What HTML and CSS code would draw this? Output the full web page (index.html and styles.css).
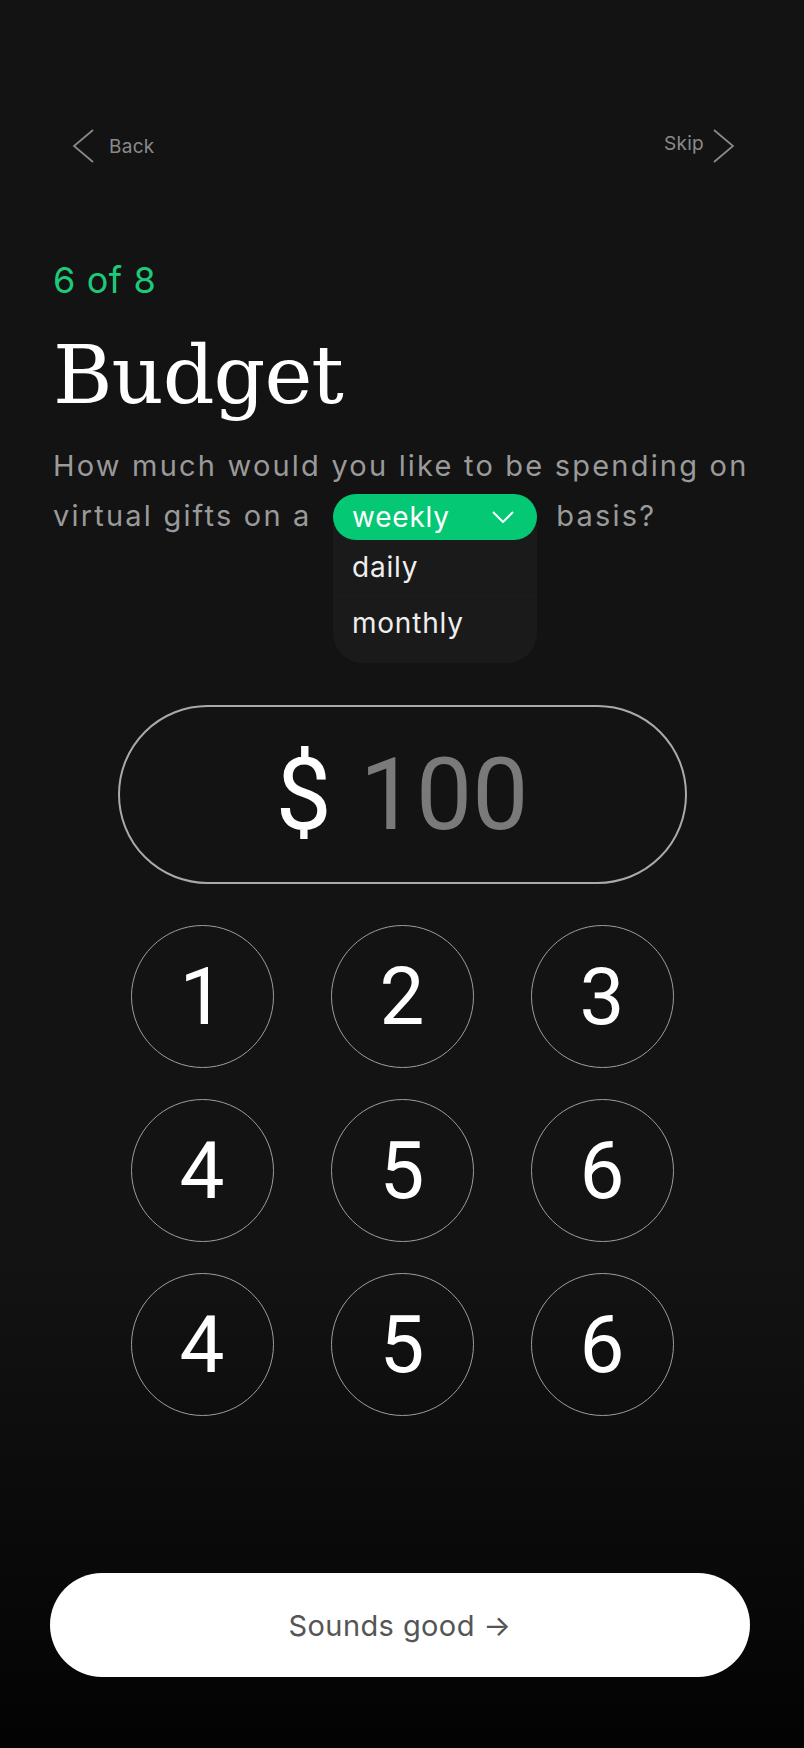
FILE: index.html
```html
<!DOCTYPE html>
<html lang="en">
<head>
    <meta charset="UTF-8">
    <meta name="viewport" content="width=device-width, initial-scale=1.0">
    <title>Budget</title>
    <link rel="stylesheet" href="styles.css">
</head>
<body>
    <div class="screen">
        <nav class="nav">
            <a class="nav-link back" href="#">
                <svg width="22" height="34" viewBox="0 0 22 34"><polyline points="21,1 2,17 21,33" /></svg>
                <span>Back</span>
            </a>
            <a class="nav-link skip" href="#">
                <span>Skip</span>
                <svg width="22" height="34" viewBox="0 0 22 34"><polyline points="1,1 20,17 1,33" /></svg>
            </a>
        </nav>

        <section class="intro">
            <p class="step">6 of 8</p>
            <h1>Budget</h1>
            <p class="question">
                How much would you like to be spending on virtual gifts on a
                <span class="select">
                    <span class="select-value">
                        weekly
                        <svg width="22" height="12" viewBox="0 0 22 12"><polyline points="1,1 11,11 21,1" /></svg>
                    </span>
                    <span class="select-menu">
                        <span class="option">daily</span>
                        <span class="option">monthly</span>
                    </span>
                </span>
                basis?
            </p>
        </section>

        <div class="amount">
            <span class="currency">$</span>
            <span class="value">100</span>
        </div>

        <div class="keypad">
            <button class="key">1</button>
            <button class="key">2</button>
            <button class="key">3</button>
            <button class="key">4</button>
            <button class="key">5</button>
            <button class="key">6</button>
            <button class="key">4</button>
            <button class="key">5</button>
            <button class="key">6</button>
        </div>

        <div class="footer">
            <button class="confirm">Sounds good →</button>
        </div>
    </div>
</body>
</html>
```

FILE: styles.css
```css
body {
    margin: 0;
    padding: 0;
    background: linear-gradient(#131313 0%, #131313 72%, #030303 100%);
    color: #fff;
    font-family: Inter, "Noto Sans", sans-serif;
    min-height: 1748px;
}
.screen {
    width: 804px;
    height: 1748px;
}
.nav {
    display: flex;
    justify-content: space-between;
    align-items: center;
    padding: 129px 69px 0 72px;
    height: 34px;
}
.nav-link {
    display: flex;
    align-items: center;
    gap: 15px;
    color: #8a8a8a;
    text-decoration: none;
    font-size: 19px;
    letter-spacing: 0.3px;
}
.nav-link svg polyline {
    fill: none;
    stroke: #8a8a8a;
    stroke-width: 1.7;
}
.skip {
    gap: 9px;
}
.skip span {
    margin-bottom: 6px;
}
.intro {
    padding: 0 48px 0 53px;
}
.step {
    margin: 99px 0 0;
    font-size: 36px;
    line-height: 36px;
    letter-spacing: 0.6px;
    color: #1ec97a;
}
h1 {
    margin: 37px 0 0;
    font-family: "DejaVu Serif", serif;
    font-weight: normal;
    font-size: 81px;
    line-height: 81px;
    letter-spacing: -1px;
}
.question {
    margin: 25px 0 0;
    font-size: 29px;
    line-height: 50px;
    color: #9a9a9a;
    letter-spacing: 2.2px;
}
.select {
    position: relative;
    display: inline-block;
    vertical-align: -1px;
    margin: 0 9px 0 11px;
    width: 204px;
    height: 46px;
    letter-spacing: 0.8px;
}
.select-value {
    position: relative;
    z-index: 2;
    display: flex;
    justify-content: space-between;
    align-items: center;
    box-sizing: border-box;
    height: 46px;
    padding: 0 23px 0 19px;
    border-radius: 23px;
    background: #05c874;
    color: #fff;
    font-size: 28px;
    line-height: 46px;
}
.select-value svg polyline {
    fill: none;
    stroke: #fff;
    stroke-width: 2;
}
.select-menu {
    position: absolute;
    top: 0;
    left: 0;
    right: 0;
    z-index: 1;
    display: flex;
    flex-direction: column;
    padding: 46px 0 12px;
    border-radius: 23px 23px 30px 30px;
    background: #1a1a1a;
}
.option {
    height: 55px;
    line-height: 55px;
    padding-left: 19px;
    font-size: 28px;
    color: #eee;
    border-bottom: 1px solid #1e1e1e;
}
.option:last-child {
    border-bottom: none;
}
.amount {
    display: flex;
    justify-content: center;
    align-items: center;
    gap: 28px;
    box-sizing: border-box;
    width: 569px;
    height: 179px;
    margin: 164px auto 0;
    border: 2px solid #aaa;
    border-radius: 90px;
    font-family: Roboto, sans-serif;
    font-size: 100px;
}
.currency {
    color: #fff;
}
.value {
    color: #7a7a7a;
}
.keypad {
    display: grid;
    grid-template-columns: repeat(3, 143px);
    column-gap: 57px;
    row-gap: 31px;
    justify-content: center;
    margin-top: 41px;
}
.key {
    width: 143px;
    height: 143px;
    padding: 0;
    border: 1.5px solid #9c9c9c;
    border-radius: 50%;
    background: none;
    color: #fff;
    font-family: Roboto, sans-serif;
    font-size: 80px;
    cursor: pointer;
}
.footer {
    padding: 157px 54px 0 50px;
}
.confirm {
    display: block;
    width: 100%;
    height: 104px;
    border: none;
    border-radius: 52px;
    background: #fff;
    color: #555;
    font-family: Inter, sans-serif;
    font-size: 29px;
    letter-spacing: 0.4px;
    cursor: pointer;
}
```
